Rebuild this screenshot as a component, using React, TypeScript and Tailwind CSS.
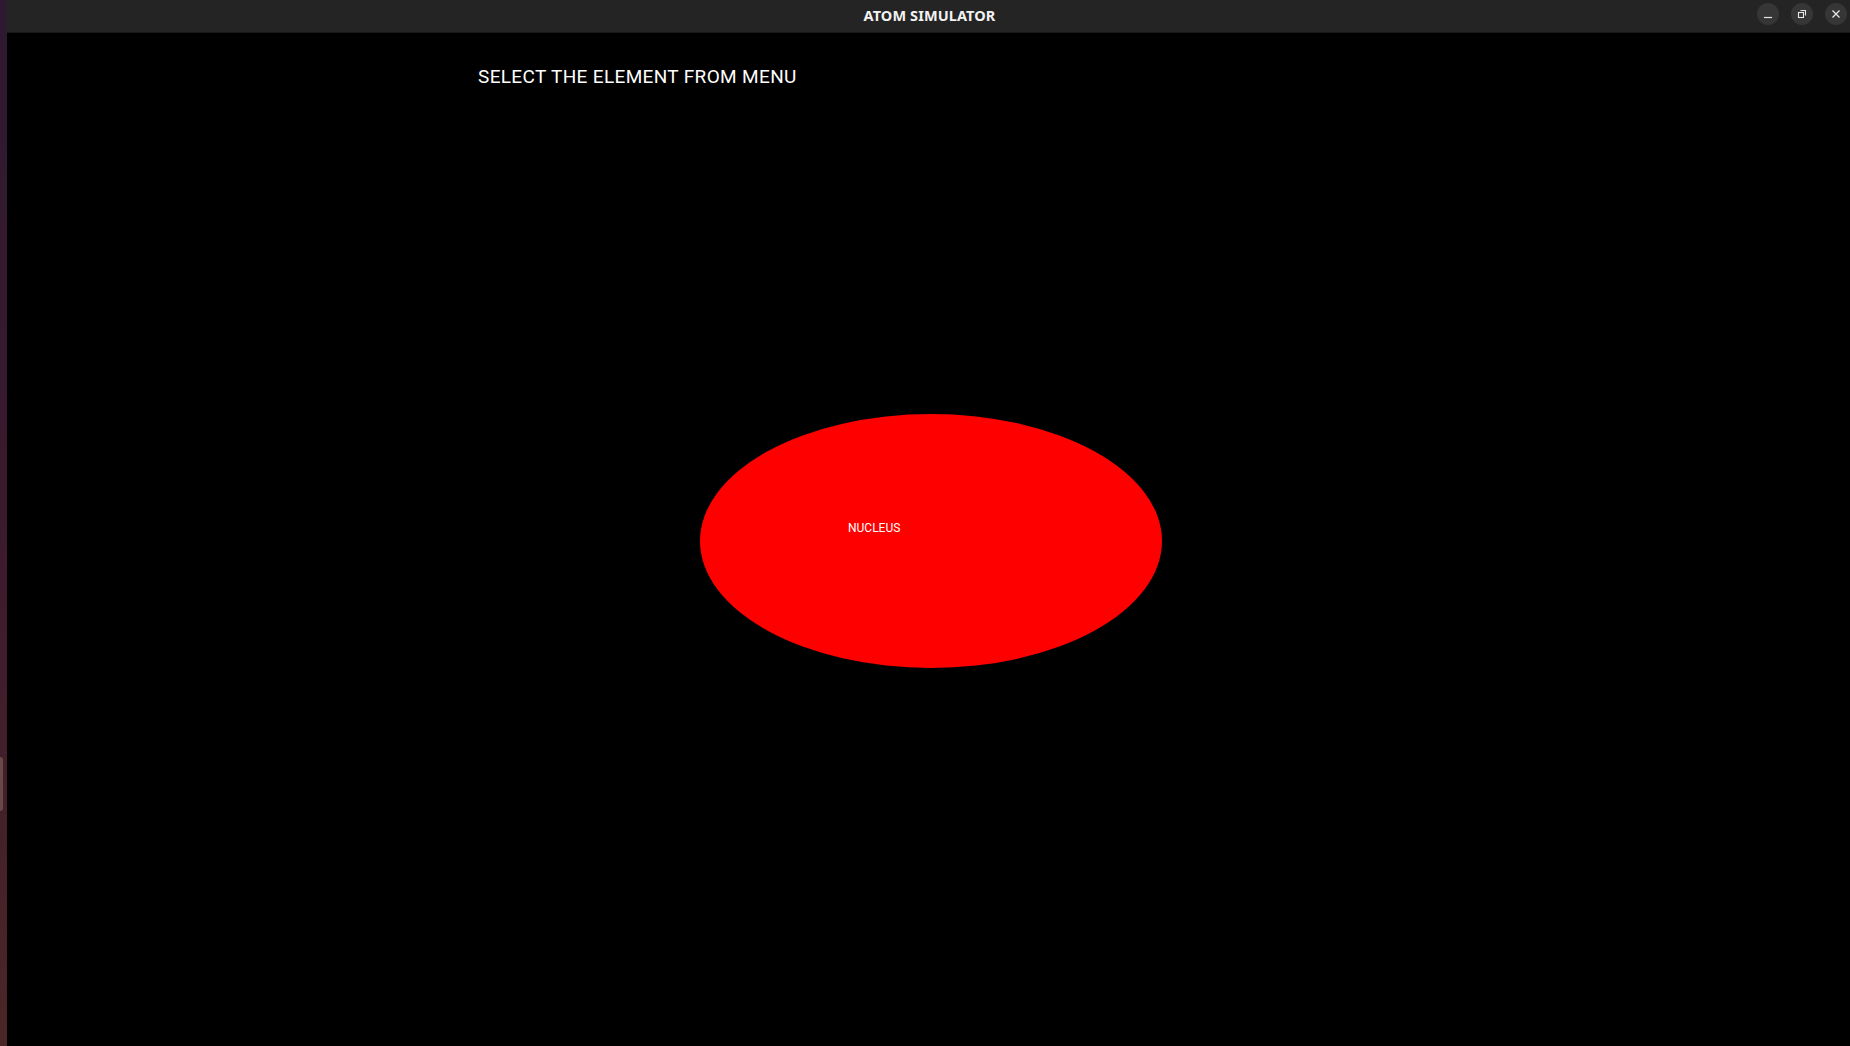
export default function App() {
  return (
    <div className="flex h-[1046px] w-[1850px] overflow-hidden bg-black font-['Roboto',sans-serif]">
      {/* desktop dock edge */}
      <div className="relative flex w-[7px] flex-col bg-gradient-to-b from-[#2d1930] via-[#3a1a2d] to-[#4b2626]">
        <div className="mt-[757px] h-[54px] w-[3px] rounded-r-[3px] bg-[#6b4848]" />
      </div>

      <div className="flex flex-1 flex-col">
        {/* title bar */}
        <div className="relative flex h-[33px] items-center justify-center border-b border-[#181818] bg-[#242424]">
          <span className="ml-[2px] font-['Noto_Sans',sans-serif] text-[14.5px] font-bold tracking-[0.1px] text-[#f2f2f2]">
            ATOM SIMULATOR
          </span>
          <div className="absolute right-[3px] top-[3px] flex gap-[12px]">
            <button className="flex h-[22px] w-[22px] items-center justify-center rounded-full bg-[#363636]">
              <svg width="10" height="10" viewBox="0 0 10 10">
                <path d="M1 8.5h8" stroke="#e6e6e6" strokeWidth="1.2" />
              </svg>
            </button>
            <button className="flex h-[22px] w-[22px] items-center justify-center rounded-full bg-[#363636]">
              <svg width="10" height="10" viewBox="0 0 10 10" fill="none">
                <rect x="1.5" y="3.5" width="5" height="5" stroke="#e6e6e6" strokeWidth="1.1" />
                <path d="M3.5 1.5h5v5" stroke="#e6e6e6" strokeWidth="1.1" />
              </svg>
            </button>
            <button className="flex h-[22px] w-[22px] items-center justify-center rounded-full bg-[#363636]">
              <svg width="10" height="10" viewBox="0 0 10 10">
                <path d="M1.5 1.5l7 7M8.5 1.5l-7 7" stroke="#e6e6e6" strokeWidth="1.3" />
              </svg>
            </button>
          </div>
        </div>

        {/* canvas */}
        <div className="flex flex-1 flex-col">
          <div className="pl-[471px] pt-[34px] text-[19px] leading-[20px] tracking-[0.35px] text-white">
            SELECT THE ELEMENT FROM MENU
          </div>
          <div className="ml-[693px] mt-[327px] h-[254px] w-[462px] rounded-[50%] bg-[#ff0000] pl-[148px] pt-[108px]">
            <span className="block text-[12px] leading-[12px] text-white">NUCLEUS</span>
          </div>
        </div>
      </div>
    </div>
  );
}
